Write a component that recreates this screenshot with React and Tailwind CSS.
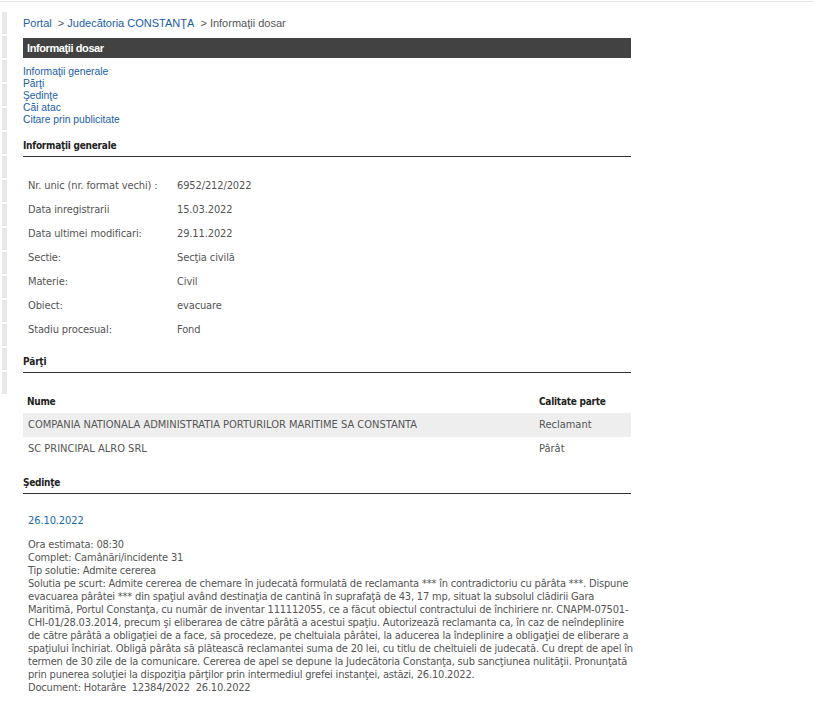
import React from "react";

const arial = "font-['Liberation_Sans',Arial,sans-serif]";
const tah = "font-['DejaVu_Sans_Condensed',Tahoma,sans-serif]";
const bold = "font-['DejaVu_Sans_Condensed',Tahoma,sans-serif] font-bold text-[10px] tracking-[-0.25px]";

const rows = [
  ["Nr. unic (nr. format vechi) :", "6952/212/2022"],
  ["Data inregistrarii", "15.03.2022"],
  ["Data ultimei modificari:", "29.11.2022"],
  ["Sectie:", "Secţia civilă"],
  ["Materie:", "Civil"],
  ["Obiect:", "evacuare"],
  ["Stadiu procesual:", "Fond"],
];

const para = [
  "Ora estimata: 08:30",
  "Complet: Camânări/incidente 31",
  "Tip solutie: Admite cererea",
  "Solutia pe scurt: Admite cererea de chemare în judecată formulată de reclamanta *** în contradictoriu cu pârâta ***. Dispune",
  "evacuarea pârâtei *** din spaţiul având destinaţia de cantină în suprafaţă de 43, 17 mp, situat la subsolul clădirii Gara",
  "Maritimă, Portul Constanţa, cu număr de inventar 111112055, ce a făcut obiectul contractului de închiriere nr. CNAPM-07501-",
  "CHI-01/28.03.2014, precum şi eliberarea de către pârâtă a acestui spaţiu. Autorizează reclamanta ca, în caz de neîndeplinire",
  "de către pârâtă a obligaţiei de a face, să procedeze, pe cheltuiala pârâtei, la aducerea la îndeplinire a obligaţiei de eliberare a",
  "spaţiului închiriat. Obligă pârâta să plătească reclamantei suma de 20 lei, cu titlu de cheltuieli de judecată. Cu drept de apel în",
  "termen de 30 zile de la comunicare. Cererea de apel se depune la Judecătoria Constanţa, sub sancţiunea nulităţii. Pronunţată",
  "prin punerea soluţiei la dispoziţia părţilor prin intermediul grefei instanţei, astăzi, 26.10.2022.",
  "Document: Hotarâre\u00a0\u00a012384/2022\u00a0\u00a026.10.2022",
];

function Heading({ children, className = "" }) {
  return (
    <div className={`border-b border-[#333] h-[20px] flex items-end pb-[4px] ${className}`}>
      <span className={`${bold} text-[#222] leading-[12px]`}>{children}</span>
    </div>
  );
}

export default function App() {
  return (
    <div className="w-[813px] h-[712px] bg-white overflow-hidden">
      <div className="h-px bg-[#e6e6e6] mt-px" />
      <div className="flex">
        <div className="ml-[2px] mt-[10px] w-[5px] flex flex-col gap-[2px]">
          {Array.from({ length: 16 }).map((_, i) => (
            <div key={i} className="h-[22px] bg-[#e8e8ea]" />
          ))}
        </div>
        <div className="ml-[16px] w-[608px]">
          <div className={`${arial} text-[11px] leading-[13px] mt-[15px] text-[#555]`}>
            <span className="text-[#1c5ea8]">Portal</span>
            <span>&nbsp; &gt; </span>
            <span className="text-[#1c5ea8]">Judecătoria CONSTANŢA</span>
            <span>&nbsp; &gt; Informaţii dosar</span>
          </div>
          <div className="mt-[8px] h-[20px] bg-[#424242] flex items-center px-[4px]">
            <span className={`${arial} font-bold text-[11px] tracking-[-0.4px] text-white`}>Informaţii dosar</span>
          </div>
          <div className={`${arial} mt-[8px] text-[10.3px] leading-[12px] text-[#1c5ea8] flex flex-col items-start`}>
            <span>Informaţii generale</span>
            <span>Părţi</span>
            <span>Şedinţe</span>
            <span>Căi atac</span>
            <span>Citare prin publicitate</span>
          </div>

          <Heading className="mt-[11px]">Informaţii generale</Heading>
          <div className={`${tah} text-[11px] tracking-[-0.12px] text-[#555] mt-[17px] pl-[5px]`}>
            {rows.map(([a, b]) => (
              <div key={a} className="flex h-[24px] items-center">
                <span className="w-[149px]">{a}</span>
                <span>{b}</span>
              </div>
            ))}
          </div>

          <Heading className="mt-[11px]">Părţi</Heading>
          <div className={`${tah} text-[11px] mt-[16px]`}>
            <div className="flex h-[24px] items-center text-[#222] pl-[4px]">
              <span className={`w-[512px] ${bold}`}>Nume</span>
              <span className={bold}>Calitate parte</span>
            </div>
            <div className="flex h-[24px] items-center text-[#555] bg-[#eeeeee] pl-[5px]">
              <span className="w-[511px]">COMPANIA NATIONALA ADMINISTRATIA PORTURILOR MARITIME SA CONSTANTA</span>
              <span>Reclamant</span>
            </div>
            <div className="flex h-[24px] items-center text-[#555] pl-[5px]">
              <span className="w-[511px]">SC PRINCIPAL ALRO SRL</span>
              <span>Pârât</span>
            </div>
          </div>

          <Heading className="mt-[13px]">Şedinţe</Heading>
          <div className={`${tah} mt-[20px] pl-[5px] text-[11px] tracking-[-0.1px] leading-[14px] text-[#1c68b0]`}>26.10.2022</div>
          <div className={`${tah} mt-[10px] pl-[5px] text-[11px] tracking-[-0.19px] leading-[13px] text-[#555] whitespace-nowrap`}>
            {para.map((l, i) => (
              <div key={i}>{l}</div>
            ))}
          </div>
        </div>
      </div>
    </div>
  );
}
